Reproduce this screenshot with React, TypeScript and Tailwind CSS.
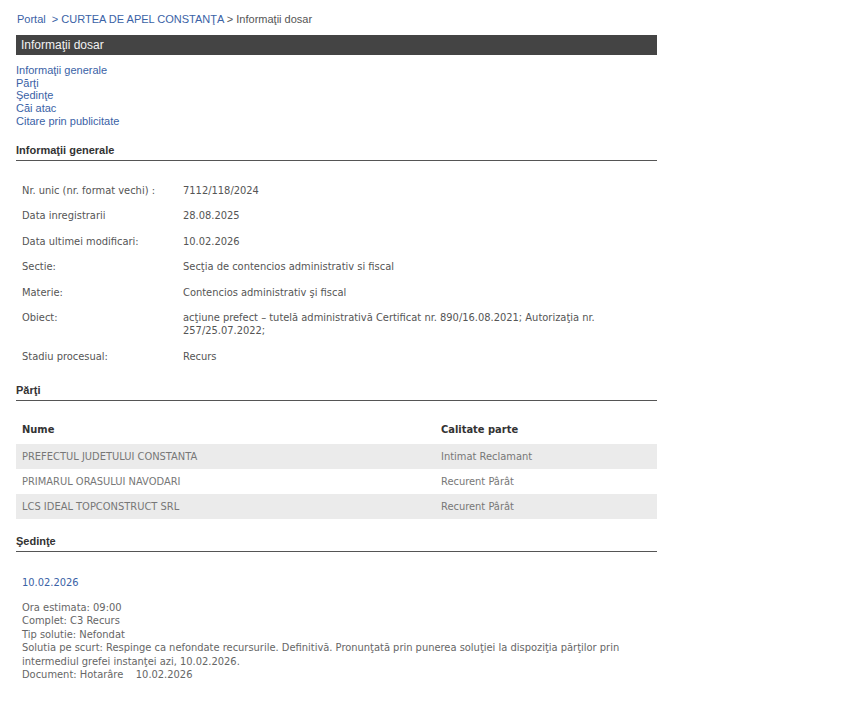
import React from 'react';

const info: [string, React.ReactNode][] = [
  ['Nr. unic (nr. format vechi) :', '7112/118/2024'],
  ['Data inregistrarii', '28.08.2025'],
  ['Data ultimei modificari:', '10.02.2026'],
  ['Sectie:', 'Secţia de contencios administrativ si fiscal'],
  ['Materie:', 'Contencios administrativ şi fiscal'],
  [
    'Obiect:',
    'acţiune prefect – tutelă administrativă Certificat nr. 890/16.08.2021; Autorizaţia nr. 257/25.07.2022;',
  ],
  ['Stadiu procesual:', 'Recurs'],
];

const parti = [
  ['PREFECTUL JUDETULUI CONSTANTA', 'Intimat Reclamant'],
  ['PRIMARUL ORASULUI NAVODARI', 'Recurent Pârât'],
  ['LCS IDEAL TOPCONSTRUCT SRL', 'Recurent Pârât'],
];

function SectionTitle({ children }: { children: React.ReactNode }) {
  return (
    <div className="border-b border-[#555] pb-[3px] text-[11px] leading-[13px] font-bold text-[#333] font-['Liberation_Sans',Arial,sans-serif]">
      {children}
    </div>
  );
}

export default function App() {
  return (
    <div className="min-h-screen bg-white font-['Liberation_Sans',Arial,sans-serif]">
      <div className="ml-[16px] w-[641px] pt-[12px]">
        {/* breadcrumb */}
        <div className="pl-[1px] text-[11px] leading-[14px] text-[#555]">
          <a className="text-[#3a62a6]">Portal</a>
          <span className="text-[#3a62a6]">&nbsp; &gt; </span>
          <a className="text-[#3a62a6]">CURTEA DE APEL CONSTANŢA</a>
          <span> &gt; Informaţii dosar</span>
        </div>

        <div className="mt-[9px] flex h-[20px] items-center bg-[#444] pl-[5px] text-[12px] text-[#f2f2f2]">
          Informaţii dosar
        </div>

        <div className="mt-[9px] flex flex-col text-[11px] leading-[12.7px] text-[#3a62a6]">
          <a>Informaţii generale</a>
          <a>Părţi</a>
          <a>Şedinţe</a>
          <a>Căi atac</a>
          <a>Citare prin publicitate</a>
        </div>

        <div className="mt-[16px]">
          <SectionTitle>Informaţii generale</SectionTitle>
          <table className="mt-[18px] w-full border-collapse font-['DejaVu_Sans_Condensed','DejaVu_Sans',sans-serif] text-[11px] leading-[12.7px] text-[#555]">
            <tbody>
              {info.map(([k, v]) => (
                <tr key={k}>
                  <td className="w-[167px] px-[6px] py-[6.4px] align-top">{k}</td>
                  <td className="py-[6.4px] pr-[60px] align-top">{v}</td>
                </tr>
              ))}
            </tbody>
          </table>
        </div>

        <div className="mt-[14px]">
          <SectionTitle>Părţi</SectionTitle>
          <table className="mt-[18px] w-full border-collapse font-['DejaVu_Sans_Condensed','DejaVu_Sans',sans-serif] text-[11px] leading-[13px]">
            <thead>
              <tr className="h-[25px] text-left text-[#333]">
                <th className="px-[6px] pb-[4px] font-bold">Nume</th>
                <th className="w-[216px] pb-[4px] font-bold">Calitate parte</th>
              </tr>
            </thead>
            <tbody className="text-[#777]">
              {parti.map(([n, c], i) => (
                <tr key={n} className={i % 2 === 0 ? 'h-[25px] bg-[#ebebeb]' : 'h-[25px]'}>
                  <td className="px-[6px]">{n}</td>
                  <td>{c}</td>
                </tr>
              ))}
            </tbody>
          </table>
        </div>

        <div className="mt-[16px]">
          <SectionTitle>Şedinţe</SectionTitle>
          <div className="px-[6px] pt-[24px] font-['DejaVu_Sans_Condensed','DejaVu_Sans',sans-serif] text-[11px] leading-[13px] text-[#666]">
            <div className="text-[#3a62a6]">10.02.2026</div>
            <div className="mt-[12px] leading-[13.5px]">
              <div>Ora estimata: 09:00</div>
              <div>Complet: C3 Recurs</div>
              <div>Tip solutie: Nefondat</div>
              <div>
                Solutia pe scurt: Respinge ca nefondate recursurile. Definitivă. Pronunţată prin punerea soluţiei la
                dispoziţia părţilor prin intermediul grefei instanţei azi, 10.02.2026.
              </div>
              <div>
                Document: Hotarâre &nbsp;&nbsp; 10.02.2026
              </div>
            </div>
          </div>
        </div>
      </div>
    </div>
  );
}
